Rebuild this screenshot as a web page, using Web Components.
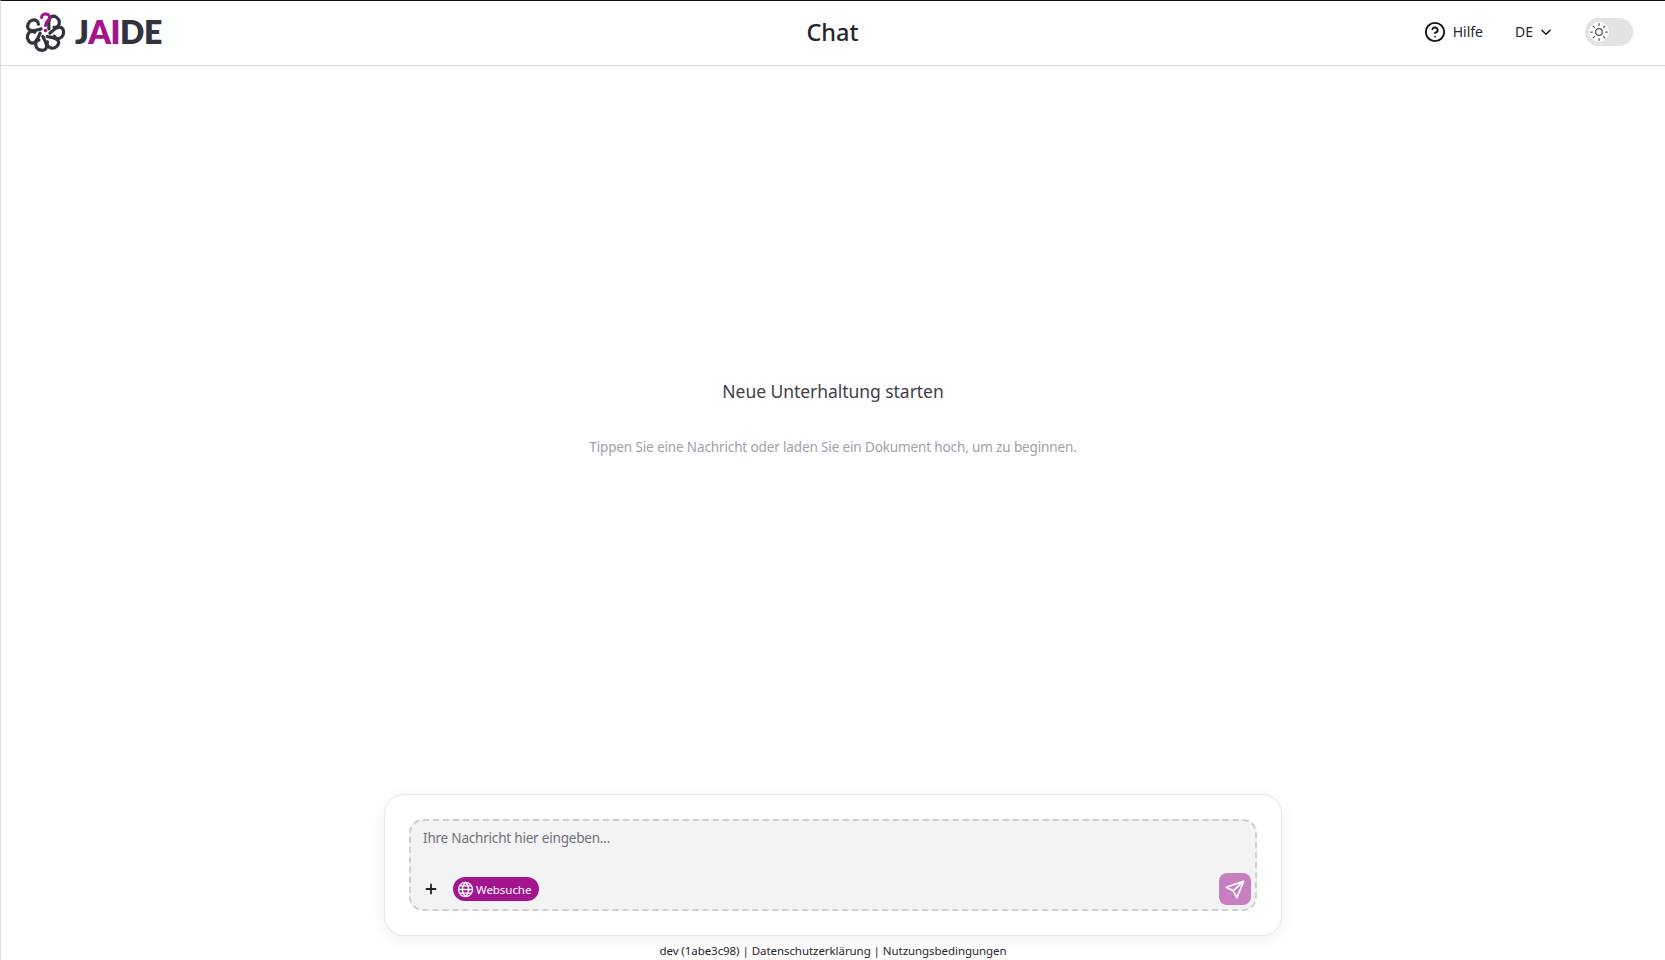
<!DOCTYPE html>
<html lang="de">
<head>
<meta charset="utf-8">
<title>JAIDE Chat</title>
<style>
  html, body { margin: 0; height: 100%; background: #fff; }
  body { font-family: "Noto Sans", "Open Sans", sans-serif; color: #1f1f24; overflow: hidden; }
</style>
</head>
<body>
<app-shell>
  <app-header slot="header"></app-header>
  <empty-state slot="main"></empty-state>
  <chat-composer slot="composer"></chat-composer>
  <app-footer slot="footer"></app-footer>
</app-shell>

<script>
  function makeEl(name, html) {
    customElements.define(name, class extends HTMLElement {
      constructor() {
        super();
        this.attachShadow({ mode: 'open' }).innerHTML = html;
      }
    });
  }

  makeEl('app-shell', `
    <style>
      :host { display: flex; flex-direction: column; height: 100vh; box-sizing: border-box;
              border-top: 1px solid #111; border-left: 1px solid #ddd; }
      main { flex: 1; min-height: 0; display: flex; flex-direction: column; }
      .mid { flex: 1; min-height: 0; display: flex; }
    </style>
    <slot name="header"></slot>
    <main>
      <div class="mid"><slot name="main"></slot></div>
      <slot name="composer"></slot>
    </main>
    <slot name="footer"></slot>
  `);

  makeEl('jaide-logo', `
    <style>
      :host { display: flex; align-items: center; gap: 9px; justify-self: start; }
      svg { display: block; }
      .word { font: 800 32px/1 "Lato", sans-serif; color: #33333f; letter-spacing: -0.4px; }
      .word b { font-weight: inherit; color: #a3158f; }
    </style>
    <svg width="42" height="42" viewBox="-21 -21 42 42" fill="none" stroke="#33333f" stroke-width="3.200" stroke-linecap="round">
      <defs><path id="p" d="M0 -5 C-4 -8 -8.500 -10.500 -8 -14.500 C-7.500 -18 -2 -19.500 1 -17.500 C4 -15.500 4.500 -12 2 -10"/></defs>
      <use href="#p" transform="rotate(51.400)"/>
      <use href="#p" transform="rotate(102.900)"/>
      <use href="#p" transform="rotate(154.300)"/>
      <use href="#p" transform="rotate(205.700)"/>
      <use href="#p" transform="rotate(257.100)"/>
      <use href="#p" transform="rotate(308.600)"/>
      <path d="M-3.500 -14.500 C-3.500 -19 4.500 -19.500 4.500 -14.500 C4.500 -11 0.500 -11 0.500 -6.500" stroke="#a3158f" stroke-width="3"/>
      <circle cx="0.500" cy="-1.500" r="1.800" fill="#a3158f" stroke="none"/>
    </svg>
    <span class="word">J<b>AI</b>DE</span>
  `);

  makeEl('theme-toggle', `
    <style>
      :host { display: block; width: 48px; height: 28px; border-radius: 14px; background: #e2e2e4; padding: 4px; box-sizing: border-box; }
      .knob { width: 20px; height: 20px; border-radius: 50%; background: #fff; display: flex; align-items: center; justify-content: center; }
    </style>
    <div class="knob">
      <svg width="20" height="20" viewBox="0 0 24 24" fill="none" stroke="#555" stroke-width="1.500" stroke-linecap="round">
        <circle cx="12" cy="12" r="4"/>
        <path d="M12 2v2M12 20v2M2 12h2M20 12h2M5 5l1.400 1.400M17.600 17.600l1.400 1.400M5 19l1.400-1.400M17.600 6.400l1.400-1.400"/>
      </svg>
    </div>
  `);

  makeEl('app-header', `
    <style>
      :host { display: grid; grid-template-columns: 1fr auto 1fr; align-items: center; height: 65px; flex: none;
              box-sizing: border-box; border-bottom: 1px solid #ddd; padding: 0 24px 3px 23px; }
      h1 { margin: 0; font-size: 23.500px; font-weight: 500; color: #26262c; }
      .right { justify-self: end; display: flex; align-items: center; font-size: 14px; color: #26262c; margin-right: 8px; }
      .help { display: flex; align-items: center; gap: 7px; }
      .lang { display: flex; align-items: center; gap: 6px; margin-left: 32px; margin-right: 32px; }
      svg { display: block; }
    </style>
    <jaide-logo></jaide-logo>
    <h1>Chat</h1>
    <div class="right">
      <span class="help">
        <svg width="22" height="22" viewBox="0 0 24 24" fill="none" stroke="#111" stroke-width="2" stroke-linecap="round" stroke-linejoin="round">
          <circle cx="12" cy="12" r="10"/><path d="M9.100 9a3 3 0 0 1 5.800 1c0 2-3 3-3 3"/><path d="M12 17h.01"/>
        </svg>
        Hilfe
      </span>
      <span class="lang">DE
        <svg width="14" height="14" viewBox="0 0 24 24" fill="none" stroke="#111" stroke-width="2.500" stroke-linecap="round" stroke-linejoin="round"><path d="m5 9 7 7 7-7"/></svg>
      </span>
      <theme-toggle></theme-toggle>
    </div>
  `);

  makeEl('empty-state', `
    <style>
      :host { flex: 1; display: flex; flex-direction: column; align-items: center; justify-content: center; padding-bottom: 24px; }
      h2 { margin: 0 0 30px; font-size: 17.500px; line-height: 28px; font-weight: 400; color: #3f3f46; letter-spacing: -0.05px; }
      p { margin: 0; font-size: 13.500px; line-height: 24px; color: #a1a1aa; letter-spacing: -0.13px; }
    </style>
    <h2>Neue Unterhaltung starten</h2>
    <p>Tippen Sie eine Nachricht oder laden Sie ein Dokument hoch, um zu beginnen.</p>
  `);

  makeEl('chat-composer', `
    <style>
      :host { display: block; flex: none; width: 898px; margin: 0 auto 1px; box-sizing: border-box; padding: 24px;
              background: #fff; border: 1px solid #e8e8ea; border-radius: 20px; box-shadow: 0 4px 16px rgba(0,0,0,.06); }
      .box { height: 92px; box-sizing: border-box; border: 2px dashed #cfcfd3; border-radius: 14px; background: #f3f3f4;
             display: flex; flex-direction: column; justify-content: space-between; padding: 5px 4px 4px 12px; }
      .ph { font-size: 13.500px; line-height: 24px; color: #71717a; letter-spacing: -0.2px; }
      .row { display: flex; align-items: center; }
      .plus { width: 18px; height: 18px; margin-right: 13px; margin-left: -1px; display: block; }
      .web { display: flex; align-items: center; gap: 2px; height: 24px; padding: 0 8px 0 4px; border-radius: 12px; background: #a3158f; color: #fff; font-size: 11.500px; letter-spacing: -0.05px; }
      .send { margin-left: auto; width: 32px; height: 32px; border-radius: 8px; background: #c87fc0; display: flex; align-items: center; justify-content: center; }
      svg { display: block; }
    </style>
    <div class="box">
      <div class="ph">Ihre Nachricht hier eingeben...</div>
      <div class="row">
        <svg class="plus" viewBox="0 0 24 24" fill="none" stroke="#222" stroke-width="2.400" stroke-linecap="round"><path d="M12 6v12M6 12h12"/></svg>
        <span class="web">
          <svg width="17" height="17" viewBox="0 0 24 24" fill="none" stroke="#fff" stroke-width="1.800"><circle cx="12" cy="12" r="10"/><path d="M2 12h20M3.500 7h17M3.500 17h17M12 2c-6 6-6 14 0 20M12 2c6 6 6 14 0 20"/></svg>
          Websuche
        </span>
        <span class="send">
          <svg width="22" height="22" viewBox="0 0 24 24" fill="none" stroke="#fff" stroke-width="1.800" stroke-linecap="round" stroke-linejoin="round"><path d="M21.500 3.500 2.500 10l7.500 4 4 7.500zM21.500 3.500 10 14"/></svg>
        </span>
      </div>
    </div>
  `);

  makeEl('app-footer', `
    <style>
      :host { display: block; flex: none; height: 23px; line-height: 27px; text-align: center; font-size: 11.500px; letter-spacing: -0.06px; color: #26262c; }
    </style>
    dev (1abe3c98) | Datenschutzerklärung | Nutzungsbedingungen
  `);
</script>
</body>
</html>
